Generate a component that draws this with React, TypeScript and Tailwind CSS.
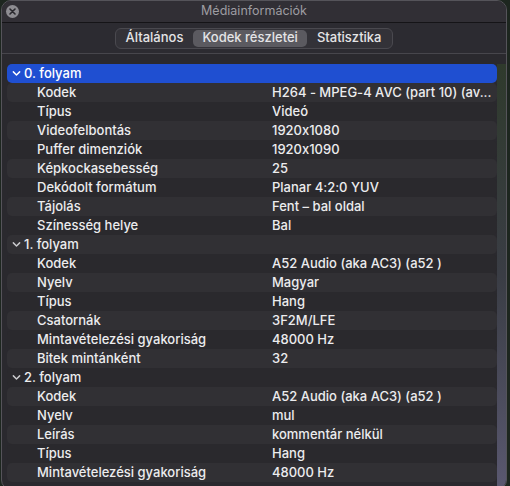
import React from "react";

type Row = { label: string; value?: string; header?: boolean };

const rows: Row[] = [
  { label: "0. folyam", header: true },
  { label: "Kodek", value: "H264 - MPEG-4 AVC (part 10) (av..." },
  { label: "Típus", value: "Videó" },
  { label: "Videofelbontás", value: "1920x1080" },
  { label: "Puffer dimenziók", value: "1920x1090" },
  { label: "Képkockasebesség", value: "25" },
  { label: "Dekódolt formátum", value: "Planar 4:2:0 YUV" },
  { label: "Tájolás", value: "Fent – bal oldal" },
  { label: "Színesség helye", value: "Bal" },
  { label: "1. folyam", header: true },
  { label: "Kodek", value: "A52 Audio (aka AC3) (a52 )" },
  { label: "Nyelv", value: "Magyar" },
  { label: "Típus", value: "Hang" },
  { label: "Csatornák", value: "3F2M/LFE" },
  { label: "Mintavételezési gyakoriság", value: "48000 Hz" },
  { label: "Bitek mintánként", value: "32" },
  { label: "2. folyam", header: true },
  { label: "Kodek", value: "A52 Audio (aka AC3) (a52 )" },
  { label: "Nyelv", value: "mul" },
  { label: "Leírás", value: "kommentár nélkül" },
  { label: "Típus", value: "Hang" },
  { label: "Mintavételezési gyakoriság", value: "48000 Hz" },
];

function Chevron() {
  return (
    <svg width="9" height="9" viewBox="0 0 10 10" className="shrink-0">
      <path d="M1.5 3.2 L5 6.7 L8.5 3.2" fill="none" stroke="currentColor" strokeWidth="1.6" strokeLinecap="round" strokeLinejoin="round" />
    </svg>
  );
}

export default function App() {
  return (
    <div
      className="w-[510px] h-[486px] overflow-hidden bg-[#1d261f] font-medium"
      style={{ fontFamily: "Inter, 'Noto Sans', sans-serif", fontFeatureSettings: "'calt' 0" }}
    >
      <div className="w-[506px] h-[490px] ml-[1px] rounded-[10px] overflow-hidden bg-[#2a292e] border border-[#55545a] flex flex-col">
        {/* title bar */}
        <div className="relative h-[22px] shrink-0 flex items-center justify-center bg-[#312f35] border-b border-[#151417]">
          <div className="absolute left-[4px] top-[4px] w-[13px] h-[13px] rounded-full bg-[#8e8d92] flex items-center justify-center">
            <svg width="7" height="7" viewBox="0 0 7 7">
              <path d="M1 1 L6 6 M6 1 L1 6" stroke="#2a292e" strokeWidth="1.6" strokeLinecap="round" />
            </svg>
          </div>
          <span className="text-[12.5px] font-normal text-[#9e9da2]">Médiainformációk</span>
        </div>

        {/* tabs */}
        <div className="h-[31px] shrink-0 flex items-center justify-center border-b border-[#47464c] bg-[#2c2b31]">
          <div className="flex items-center h-[21px] rounded-[6px] border border-[#4a494f] bg-[#333238] p-[1px] text-[13px] text-[#e4e4e6]">
            <div className="pl-[9px] pr-[10px] h-full flex items-center">Általános</div>
            <div className="px-[9px] h-full flex items-center rounded-[5px] bg-[#5b5a60]">Kodek részletei</div>
            <div className="px-[10px] h-full flex items-center">Statisztika</div>
          </div>
        </div>

        {/* list */}
        <div className="flex flex-1 pt-[10px]">
          <div className="flex-1 pl-[5px] flex flex-col">
            {rows.map((r, i) => (
              <div
                key={i}
                className={
                  "h-[19px] shrink-0 flex items-center rounded-[5px] text-[13px] " +
                  (i === 0
                    ? "bg-[#1f4fd1] text-white"
                    : i % 2 === 1
                    ? "bg-[#313034] text-[#ececee]"
                    : "bg-[#2a292d] text-[#ececee]")
                }
              >
                {r.header ? (
                  <div className={"flex items-center gap-[3px] pl-[5px] " + (i === 0 ? "text-white" : "text-[#c9c9cc]")}>
                    <Chevron />
                    <span className={i === 0 ? "text-white" : "text-[#ececee]"}>{r.label}</span>
                  </div>
                ) : (
                  <>
                    <div className="w-[265px] pl-[30px] shrink-0 truncate">{r.label}</div>
                    <div className="flex-1 truncate pr-[4px]">{r.value}</div>
                  </>
                )}
              </div>
            ))}
          </div>
          <div className="w-[9px] shrink-0 bg-gradient-to-b from-[#2f3a2c] via-[#3a3d45] to-[#5a5870]" />
        </div>
      </div>
    </div>
  );
}
